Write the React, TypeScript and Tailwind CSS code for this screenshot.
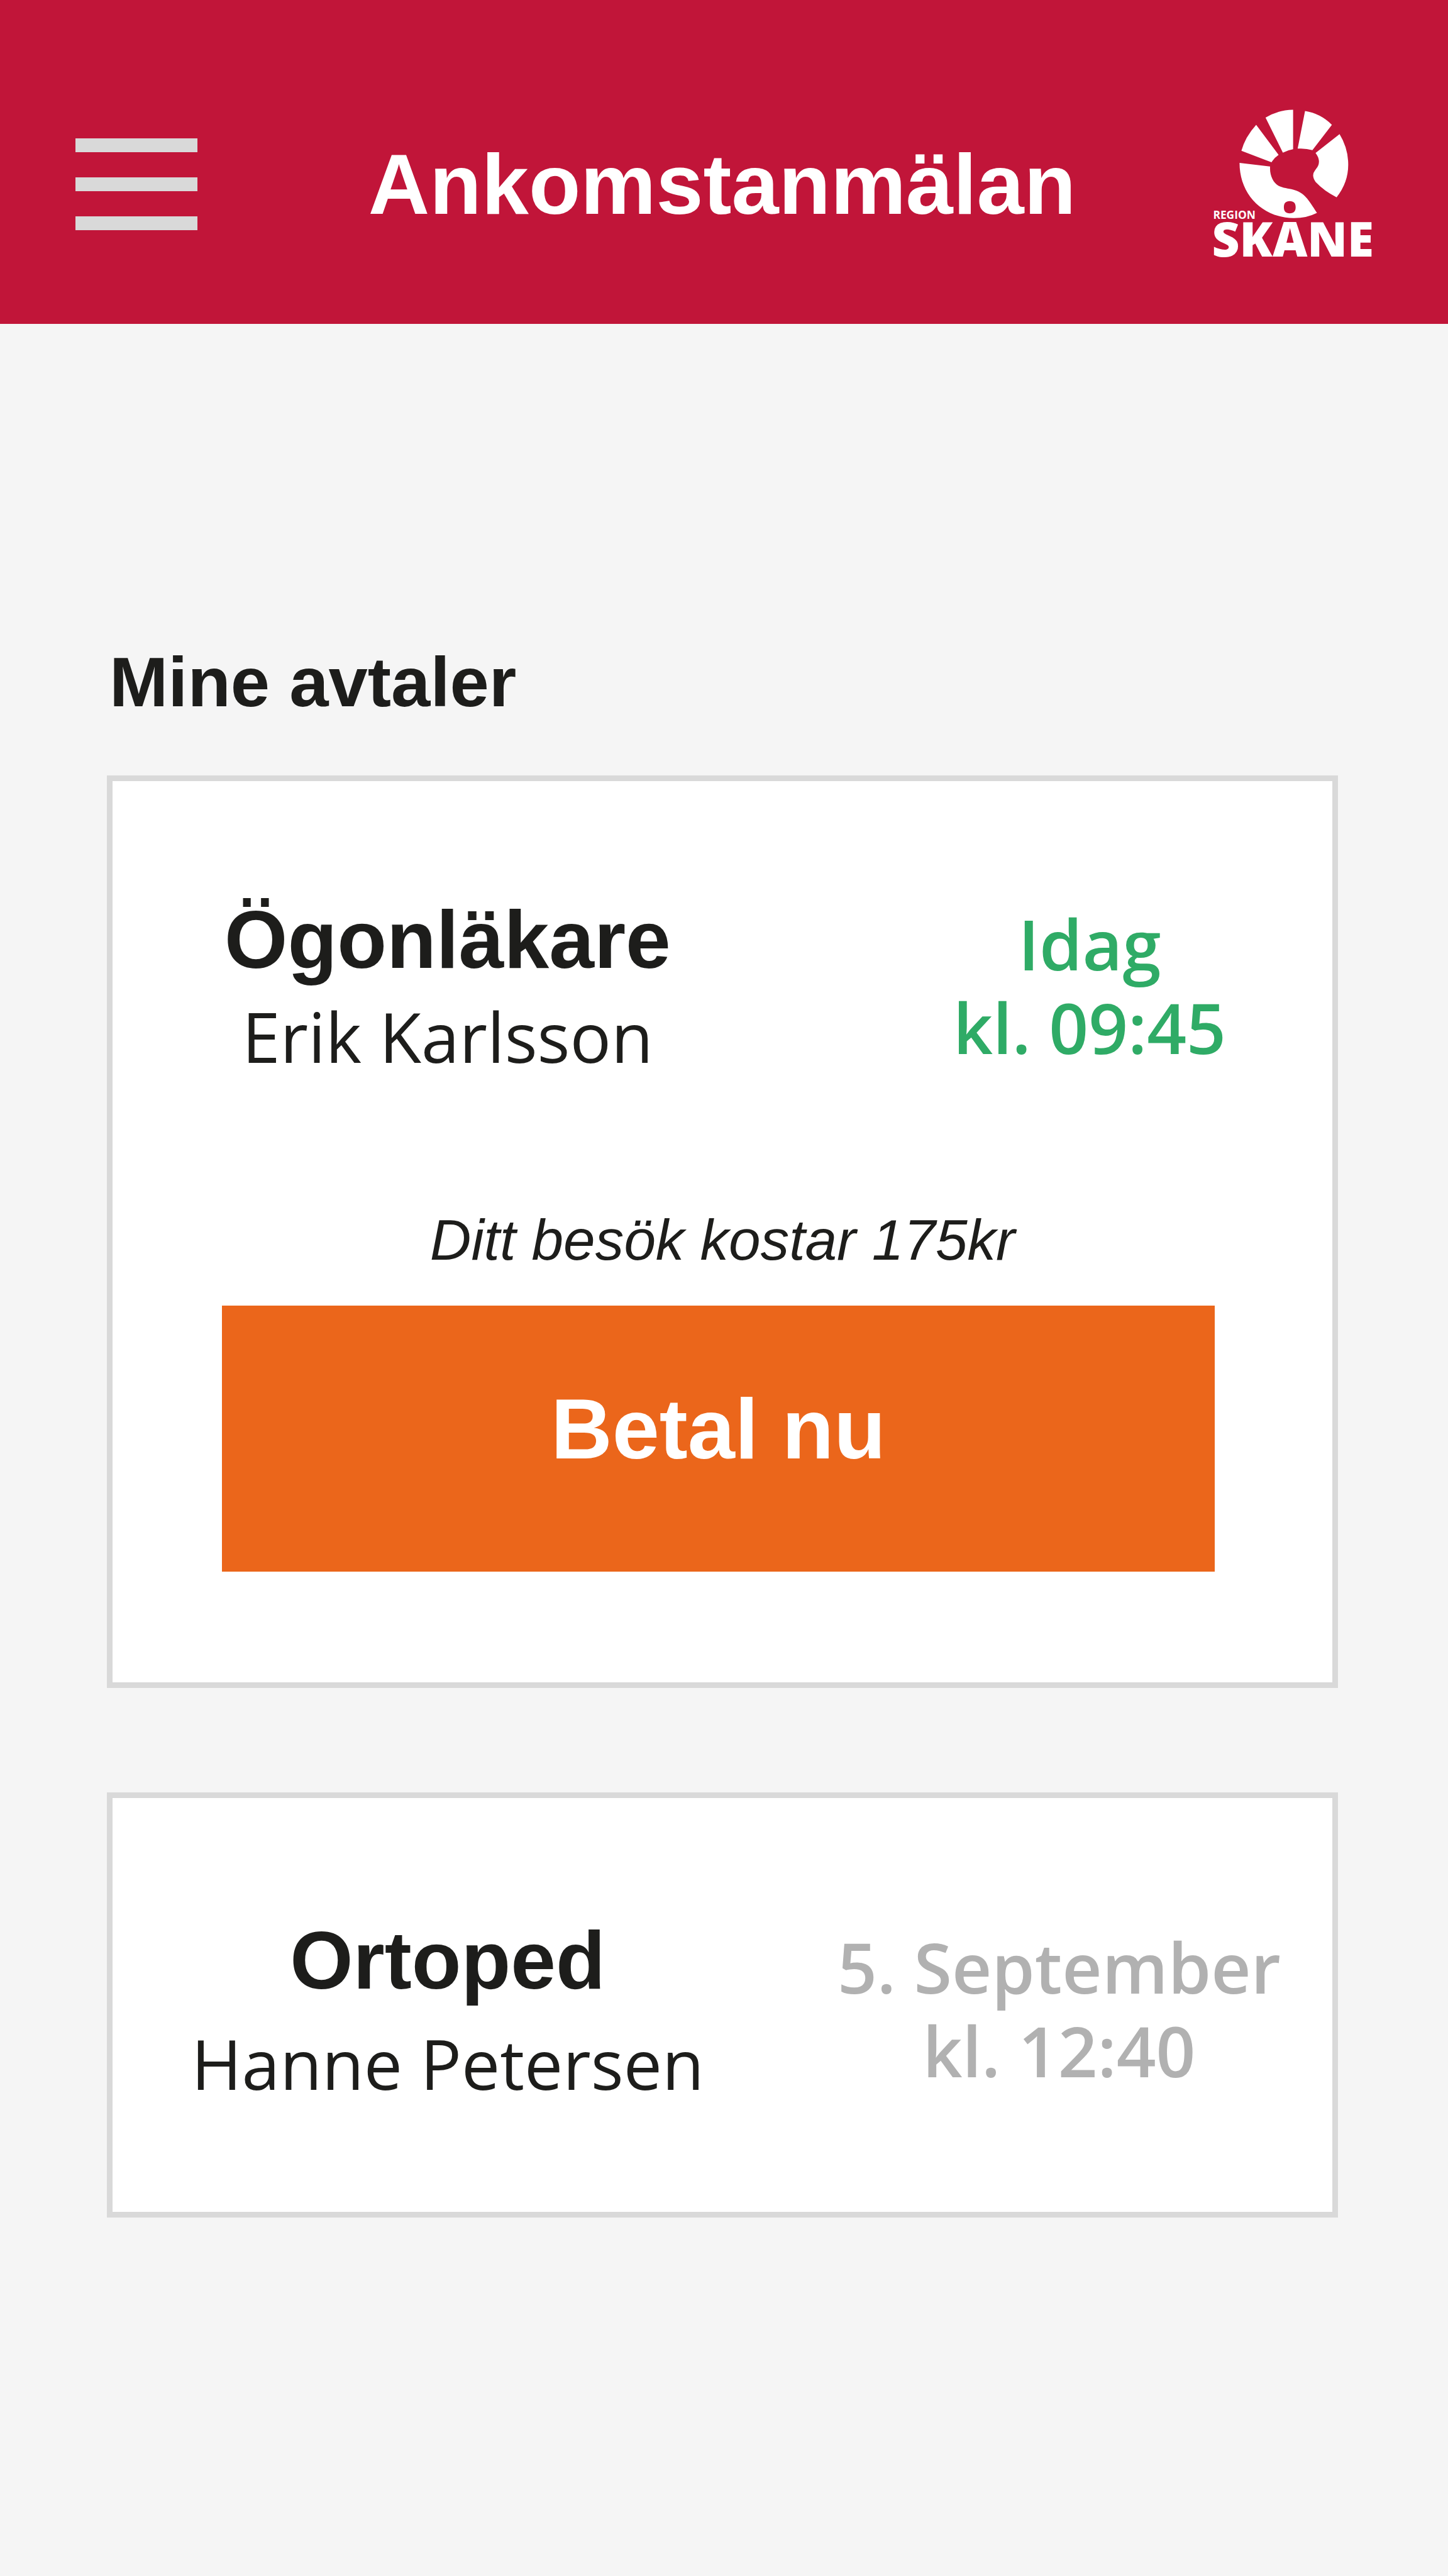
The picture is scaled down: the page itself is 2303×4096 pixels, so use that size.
const HELV = "font-['Liberation_Sans',Arial,sans-serif]";
const OPEN = "font-['Open_Sans',sans-serif]";

function SkaneLogo() {
  return (
    <svg
      viewBox="0 0 1124 1054"
      className="h-auto w-[254px] shrink-0 justify-self-end overflow-visible"
      role="img"
      aria-label="Region Skåne"
    >
      <g transform="translate(-136 -76)" fill="#fff">
        <path d="M432 184 590 396Q560 416 540 448L328 367Q354 270 432 184Z" />
        <path d="M498 134Q584 80 692 78V356Q655 362 620 380Z" />
        <path d="M776 87Q885 104 965 184L828 363Q780 348 724 352Z" />
        <path d="M1019 250Q1080 350 1080 465Q1080 590 998 694Q910 650 850 586Q818 540 846 505C864 481 874 470 874 440Q872 410 850 382Z" />
        <path
          fillRule="evenodd"
          d="M315 452 530 478C526 540 552 590 588 613C620 630 660 632 692 640C770 660 800 710 860 804Q785 842 695 841C470 836 315 670 315 452ZM627 764C627 736 640 721 668 721C697 721 710 736 710 764C710 792 697 807 668 807C640 807 627 792 627 764Z"
        />
        <text x="129" y="848" fontSize="77" fontWeight="700" fontFamily="'Open Sans', sans-serif">
          REGION
        </text>
        <text x="120" y="1112" fontSize="338" fontWeight="800" fontFamily="'Open Sans', sans-serif">
          SKANE
        </text>
      </g>
    </svg>
  );
}

function Header() {
  return (
    <header className="grid h-[515px] grid-cols-[1fr_auto_1fr] items-center bg-[#c11539] pt-[71px] pr-[118px] pl-30">
      <button type="button" aria-label="Meny" className="flex w-[194px] flex-col gap-10">
        <span className="h-[22px] w-full bg-[#d9d9d9]" />
        <span className="h-[22px] w-full bg-[#d9d9d9]" />
        <span className="h-[22px] w-full bg-[#d9d9d9]" />
      </button>
      <h1 className={`${HELV} pr-2 text-[135px] leading-none font-bold text-white`}>Ankomstanmälan</h1>
      <SkaneLogo />
    </header>
  );
}

type Visit = { title: string; doctor: string; day: string; time: string; price?: string };

const visits: Visit[] = [
  { title: "Ögonläkare", doctor: "Erik Karlsson", day: "Idag", time: "kl. 09:45", price: "Ditt besök kostar 175kr" },
  { title: "Ortoped", doctor: "Hanne Petersen", day: "5. September", time: "kl. 12:40" },
];

function VisitCard({ title, doctor, day, time, price }: Visit) {
  return (
    <li className={`border-[9px] border-[#d9d9d9] bg-white ${price ? "pt-[172px] pb-44" : "pt-[178px] pb-[162px]"}`}>
      <div className={`flex items-start justify-between pl-[125px] ${price ? "pr-[169px]" : "pr-[82px]"}`}>
        <div className={`flex w-[816px] flex-col items-center whitespace-nowrap ${price ? "" : "gap-2.5"}`}>
          <h3 className={`${HELV} text-[129px] leading-[160px] font-bold`}>{title}</h3>
          <p className={`${OPEN} text-[109px] leading-[148px]`}>{doctor}</p>
        </div>
        <p
          className={`${OPEN} text-center text-[110px] leading-[133px] font-semibold whitespace-nowrap ${
            price ? "pt-5 text-[#2fab66]" : "pt-6 text-[#b1b1b1]"
          }`}
        >
          {day}
          <br />
          {time}
        </p>
      </div>
      {price && (
        <>
          <p className={`${HELV} mt-[190px] text-center text-[91px] leading-[120px] italic`}>{price}</p>
          <div className="mt-11 pr-[187px] pl-[174px]">
            <button
              type="button"
              className={`${HELV} block h-[423px] w-full bg-[#eb661b] pb-7 text-[135px] font-bold text-white`}
            >
              Betal nu
            </button>
          </div>
        </>
      )}
    </li>
  );
}

export default function App() {
  return (
    <div className="min-h-screen bg-[#f5f5f5] text-[#1d1d1b]">
      <Header />
      <main className="pt-[500px] pr-[175px] pl-[170px]">
        <h2 className={`${HELV} pl-1 text-[112px] leading-[140px] font-bold`}>Mine avtaler</h2>
        <ul className="mt-[78px] flex flex-col gap-[166px]">
          {visits.map((v) => (
            <VisitCard key={v.title} {...v} />
          ))}
        </ul>
      </main>
    </div>
  );
}
